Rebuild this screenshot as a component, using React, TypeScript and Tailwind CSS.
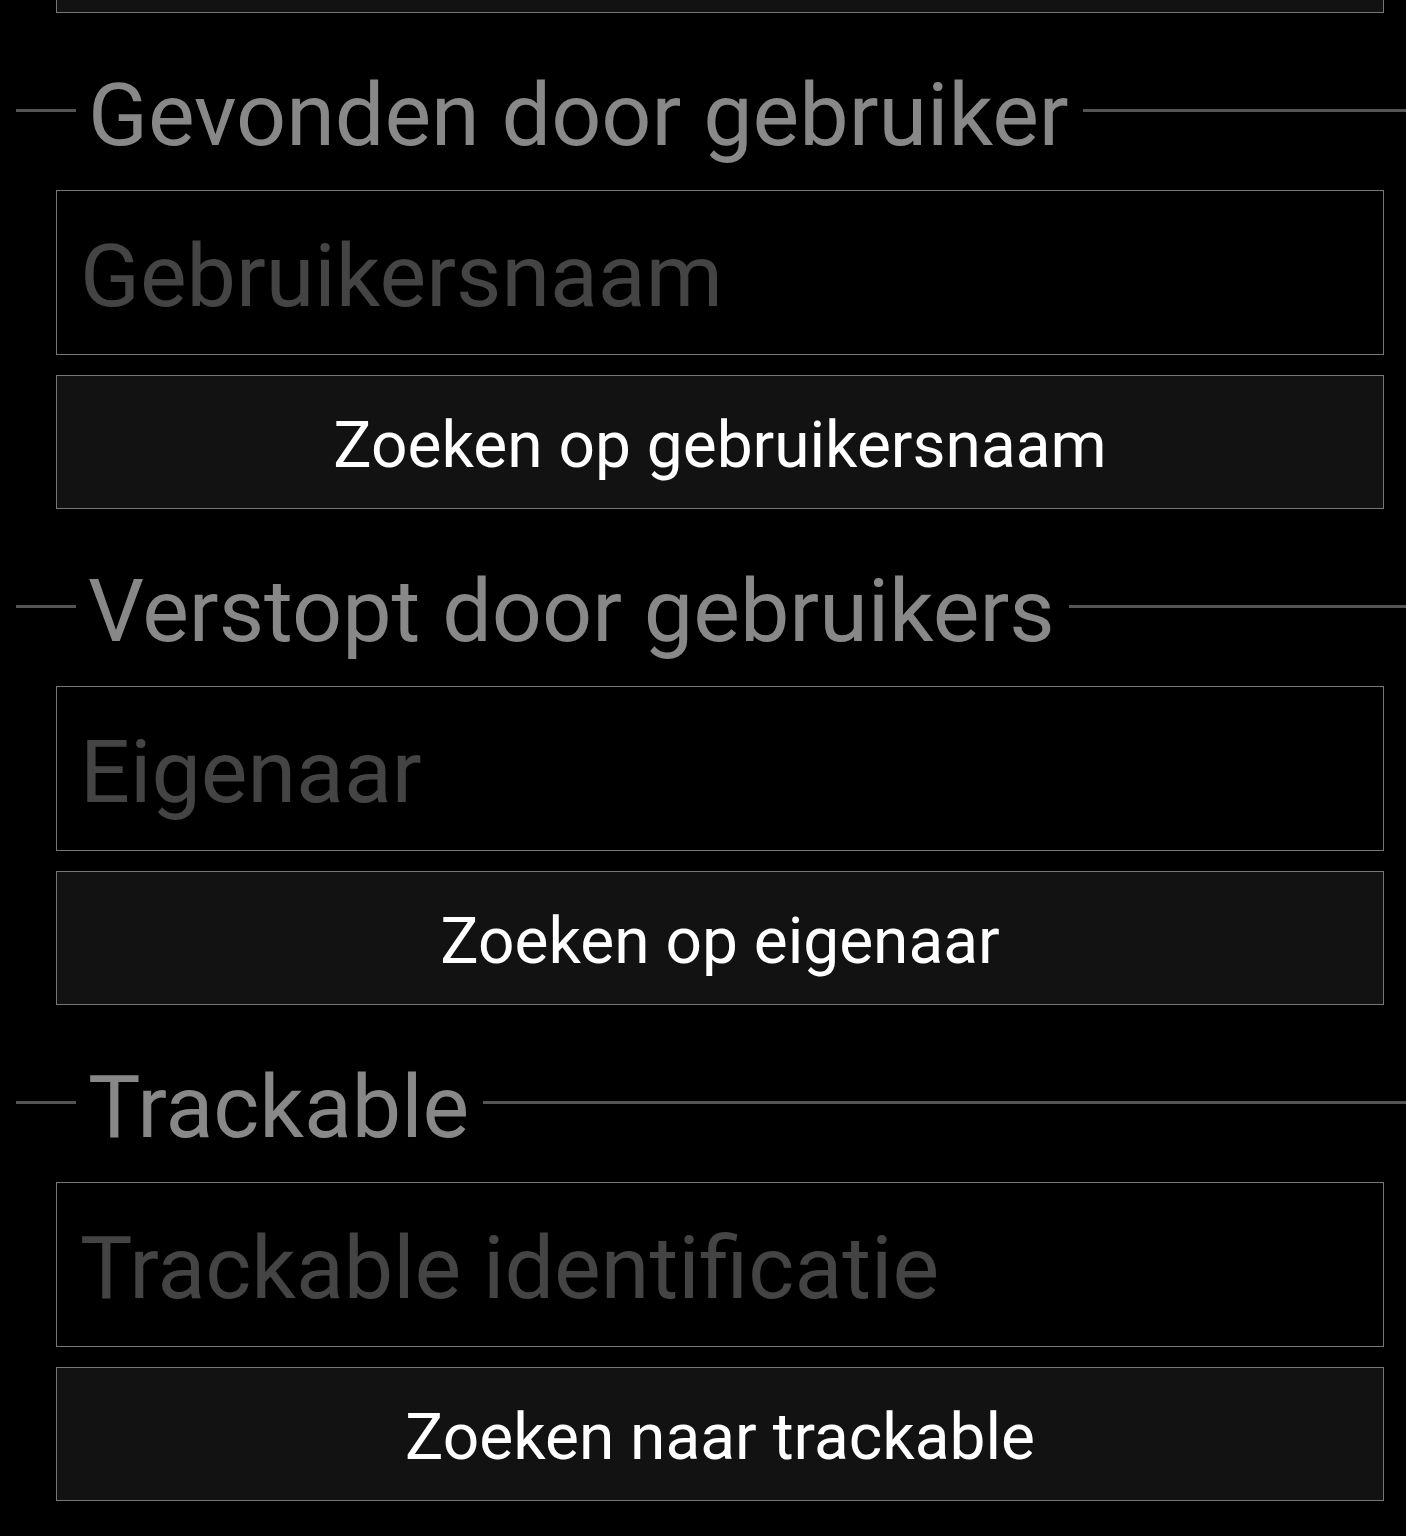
import React from "react";

const font = { fontFamily: "Roboto, 'Noto Sans', sans-serif" };

function Section({ title, placeholder, button }: { title: string; placeholder: string; button: string }) {
  return (
    <div>
      <div className="flex items-center h-[177px] pt-[17px] pl-[16px]">
        <div className="w-[60px] h-[3px] bg-[#555]" />
        <div className="pl-[12px] pr-[14px] pt-[9px] text-[88px] leading-none text-[#888] whitespace-nowrap">{title}</div>
        <div className="flex-1 h-[3px] bg-[#555]" />
      </div>
      <div className="pl-[56px] pr-[22px]">
        <input
          placeholder={placeholder}
          className="block w-full h-[165px] border border-[#777] bg-black pl-[23px] pt-[6px] text-[88px] text-white placeholder:text-[#444] outline-none"
          style={font}
        />
        <button className="mt-[20px] block w-full h-[134px] border border-[#777] bg-[#121212] pt-[8px] text-[64px] text-white" style={font}>
          {button}
        </button>
      </div>
    </div>
  );
}

export default function App() {
  return (
    <div className="w-[1406px] h-[1536px] bg-black overflow-hidden" style={font}>
      <div className="pl-[56px] pr-[22px]">
        <div className="h-[13px] border-x border-b border-[#777] bg-[#121212]" />
      </div>
      <Section title="Gevonden door gebruiker" placeholder="Gebruikersnaam" button="Zoeken op gebruikersnaam" />
      <Section title="Verstopt door gebruikers" placeholder="Eigenaar" button="Zoeken op eigenaar" />
      <Section title="Trackable" placeholder="Trackable identificatie" button="Zoeken naar trackable" />
    </div>
  );
}
